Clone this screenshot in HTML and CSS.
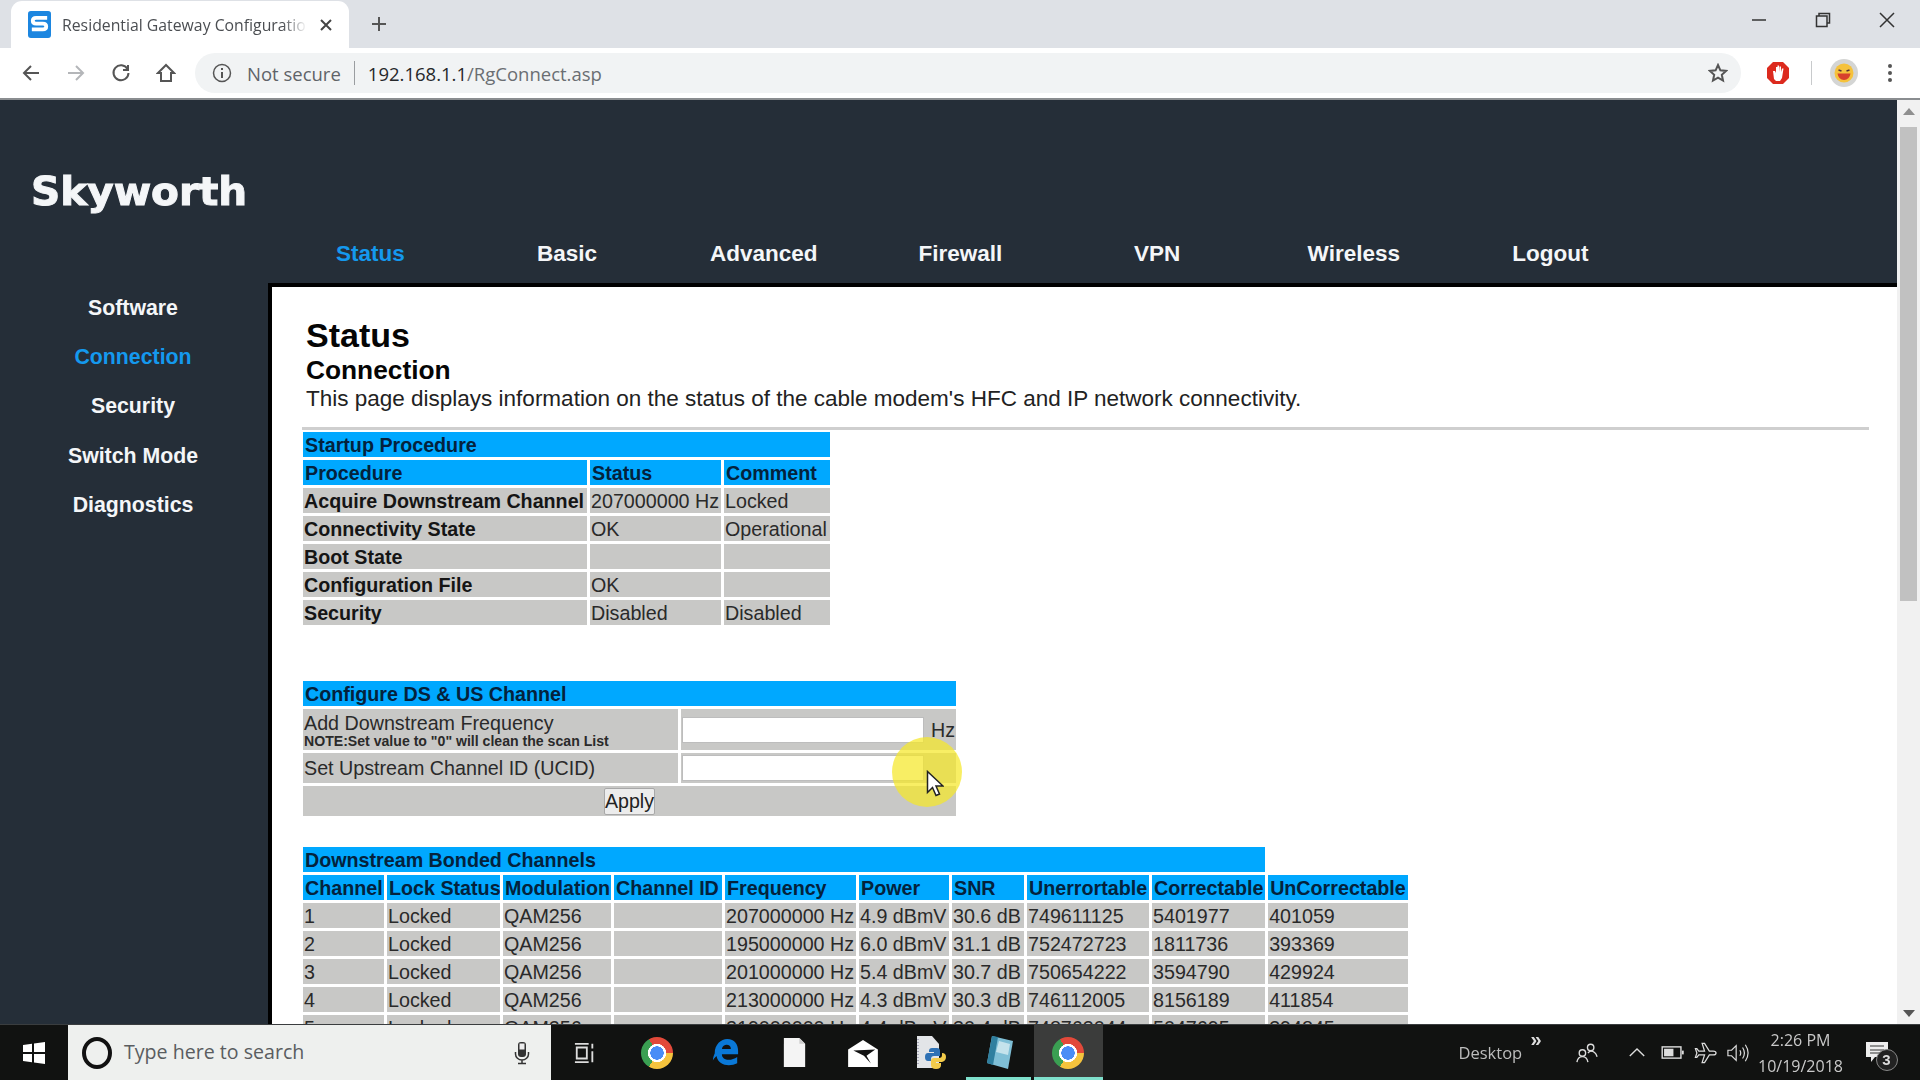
FILE: index.html
```html
<!DOCTYPE html>
<html lang="en">
<head>
<meta charset="utf-8">
<title>Residential Gateway Configuration</title>
<link rel="stylesheet" href="styles.css">
</head>
<body>
<div class="screen">
  <div class="tabstrip">
    <div class="tab">
      <svg class="favicon" viewBox="0 0 24 28"><rect width="24" height="28" rx="3" fill="#1c86e0"/><path d="M20 7H8.500Q5 7 5 10t3.500 3h7q3.500 0 3.500 3t-3.500 3H4" fill="none" stroke="#fff" stroke-width="4"/></svg>
      <span class="tab-title">Residential Gateway Configuration</span>
      <svg class="tab-close" viewBox="0 0 12 12"><path d="M1 1l10 10M11 1L1 11" stroke="#444" stroke-width="2"/></svg>
    </div>
    <svg class="newtab" viewBox="0 0 16 16"><path d="M8 1v14M1 8h14" stroke="#555" stroke-width="2"/></svg>
    <div class="winctl">
      <svg viewBox="0 0 16 16"><path d="M1 8h14" stroke="#333" stroke-width="1.500"/></svg>
      <svg viewBox="0 0 16 16"><path d="M4 4V1.500h10.500V11H12M1.500 4H12v10.500H1.500z" fill="none" stroke="#333" stroke-width="1.500"/></svg>
      <svg viewBox="0 0 16 16"><path d="M1 1l14 14M15 1L1 15" stroke="#333" stroke-width="1.500"/></svg>
    </div>
  </div>
  <div class="toolbar">
    <svg class="navicon" viewBox="0 0 20 20"><path d="M18 10H3M10 3l-7 7 7 7" fill="none" stroke="#555" stroke-width="2"/></svg>
    <svg class="navicon" viewBox="0 0 20 20"><path d="M2 10h15M10 3l7 7-7 7" fill="none" stroke="#b4b6b9" stroke-width="2"/></svg>
    <svg class="navicon" viewBox="0 0 20 20"><path d="M16.500 6A7.500 7.500 0 1 0 17.500 10M17 2v5h-5" fill="none" stroke="#555" stroke-width="2"/></svg>
    <svg class="navicon" viewBox="0 0 20 20"><path d="M10 2L2 10h3v8h10v-8h3z" fill="none" stroke="#555" stroke-width="2"/></svg>
    <div class="omnibox">
      <svg class="info" viewBox="0 0 20 20"><circle cx="10" cy="10" r="8.500" fill="none" stroke="#555" stroke-width="1.500"/><path d="M10 9v6M10 5v2" stroke="#555" stroke-width="2"/></svg>
      <span class="notsecure">Not secure</span>
      <span class="omni-sep"></span>
      <span class="url"><b>192.168.1.1</b>/RgConnect.asp</span>
      <svg class="star" viewBox="0 0 20 20"><path d="M10 2l2.400 5.300 5.600.6-4.200 3.900 1.200 5.700-5-2.900-5 2.900 1.200-5.700L2 7.900l5.600-.6z" fill="none" stroke="#555" stroke-width="2"/></svg>
    </div>
    <svg class="stopsign" viewBox="0 0 24 24"><path d="M7 1h10l6 6v10l-6 6H7l-6-6V7z" fill="#dc2a1e"/><path d="M8 18l-1-8h2l1 2V6h1.500v5V4.500H13V11l.5-5.500H15V11l1-3.500h1.500L16 17l-2 3h-4z" fill="#fff"/></svg>
    <span class="tool-sep"></span>
    <svg class="avatar" viewBox="0 0 28 28"><circle cx="14" cy="14" r="14" fill="#d4d5d4"/><circle cx="14" cy="14" r="9.500" fill="#f5c23c"/><path d="M7.500 14.500h13Q19.500 21 14 21t-6.500-6.500" fill="#d8412c"/><path d="M8.500 11l3 1M19.500 11l-3 1" stroke="#533" stroke-width="1.500"/></svg>
    <svg class="menu" viewBox="0 0 6 20"><circle cx="3" cy="3" r="2" fill="#555"/><circle cx="3" cy="10" r="2" fill="#555"/><circle cx="3" cy="17" r="2" fill="#555"/></svg>
  </div>
  <div class="viewport">
    <div class="page">
      <div class="topband">
        <div class="logo">Skyworth</div>
        <nav class="topnav">
          <a class="active">Status</a><a>Basic</a><a>Advanced</a><a>Firewall</a><a>VPN</a><a>Wireless</a><a>Logout</a>
        </nav>
      </div>
      <div class="lower">
        <aside class="sidebar">
          <a>Software</a><a class="active">Connection</a><a>Security</a><a>Switch Mode</a><a>Diagnostics</a>
        </aside>
        <main class="content">
          <h1>Status</h1>
          <h2>Connection</h2>
          <p class="lead">This page displays information on the status of the cable modem's HFC and IP network connectivity.</p>
          <div class="rule"></div>
          <table class="grid startup">
            <colgroup><col class="s1"><col class="s2"><col class="s3"></colgroup>
            <tr class="head"><td colspan="3">Startup Procedure</td></tr>
            <tr class="head"><td>Procedure</td><td>Status</td><td>Comment</td></tr>
            <tr><td class="strong">Acquire Downstream Channel</td><td>207000000 Hz</td><td>Locked</td></tr>
            <tr><td class="strong">Connectivity State</td><td>OK</td><td>Operational</td></tr>
            <tr><td class="strong">Boot State</td><td></td><td></td></tr>
            <tr><td class="strong">Configuration File</td><td>OK</td><td></td></tr>
            <tr><td class="strong">Security</td><td>Disabled</td><td>Disabled</td></tr>
          </table>
          <table class="grid config">
            <colgroup><col class="c1"><col class="c2"></colgroup>
            <tr class="head"><td colspan="2">Configure DS &amp; US Channel</td></tr>
            <tr class="tall"><td>Add Downstream Frequency<div class="note">NOTE:Set value to "0" will clean the scan List</div></td><td><div class="field"><input class="textin" type="text"><span>Hz</span></div></td></tr>
            <tr class="mid"><td>Set Upstream Channel ID (UCID)</td><td><div class="field"><input class="textin" type="text"></div></td></tr>
            <tr class="mid"><td colspan="2" class="center"><button class="apply">Apply</button></td></tr>
          </table>
          <table class="grid channels">
            <colgroup><col class="d1"><col class="d2"><col class="d3"><col class="d4"><col class="d5"><col class="d6"><col class="d7"><col class="d8"><col class="d9"><col class="d10"></colgroup>
            <tr class="head"><td colspan="9">Downstream Bonded Channels</td></tr>
            <tr class="head"><td>Channel</td><td>Lock Status</td><td>Modulation</td><td>Channel ID</td><td>Frequency</td><td>Power</td><td>SNR</td><td>Unerrortable</td><td>Correctable</td><td>UnCorrectable</td></tr>
            <tr><td>1</td><td>Locked</td><td>QAM256</td><td></td><td>207000000 Hz</td><td>4.9 dBmV</td><td>30.6 dB</td><td>749611125</td><td>5401977</td><td>401059</td></tr>
            <tr><td>2</td><td>Locked</td><td>QAM256</td><td></td><td>195000000 Hz</td><td>6.0 dBmV</td><td>31.1 dB</td><td>752472723</td><td>1811736</td><td>393369</td></tr>
            <tr><td>3</td><td>Locked</td><td>QAM256</td><td></td><td>201000000 Hz</td><td>5.4 dBmV</td><td>30.7 dB</td><td>750654222</td><td>3594790</td><td>429924</td></tr>
            <tr><td>4</td><td>Locked</td><td>QAM256</td><td></td><td>213000000 Hz</td><td>4.3 dBmV</td><td>30.3 dB</td><td>746112005</td><td>8156189</td><td>411854</td></tr>
            <tr><td>5</td><td>Locked</td><td>QAM256</td><td></td><td>219000000 Hz</td><td>4.4 dBmV</td><td>30.4 dB</td><td>748763044</td><td>5047695</td><td>394845</td></tr>
          </table>
          <div class="highlight"></div>
          <svg class="pointer" viewBox="0 0 18 28"><path d="M1.500 1.500v21l5-5 3.500 8 3.500-1.500-3.500-8h7z" fill="#fff" stroke="#222" stroke-width="1.500"/></svg>
        </main>
      </div>
    </div>
    <div class="scrollbar">
      <span class="arrow up"></span>
      <span class="thumb"></span>
      <span class="arrow down"></span>
    </div>
  </div>
  <footer class="taskbar">
    <div class="startbtn"><svg viewBox="0 0 24 24"><path d="M1 4l9-1.300V11H1zM12 2.400L23 1v10H12zM1 13h9v8.300L1 20zM12 13h11v10l-11-1.600z" fill="#fff"/></svg></div>
    <div class="searchbox">
      <span class="cortana"></span>
      <span class="searchtext">Type here to search</span>
      <svg class="mic" viewBox="0 0 16 24"><rect x="4" y="1" width="8" height="15" rx="3" fill="#333"/><rect x="5.500" y="2.500" width="5" height="6" fill="#eee"/><path d="M1.500 11v2a6.500 6 0 0 0 13 0v-2M8 19v3M4 22.500h8" fill="none" stroke="#333" stroke-width="1.500"/></svg>
    </div>
    <div class="taskitem taskview"><svg viewBox="0 0 24 24"><path d="M1 2h15M1 22h15M3 6h11v12H3zM20 2v5M20 10v12" fill="none" stroke="#ddd" stroke-width="2"/></svg></div>
    <div class="taskitem"><span class="chrome"></span></div>
    <div class="taskitem"><svg class="tico" viewBox="0 0 30 32"><path d="M3 17C3 7 10 1 17 1c8 0 12 6 12 13v4H11c0 7 10 8 17 3v7c-8 4-21 3-23-8-2 2-3 3-4 5 0-3 1-6 2-8zM11 12h10c0-6-9-6-10 0z" fill="#0a78d7"/></svg></div>
    <div class="taskitem"><svg class="tico" viewBox="0 0 24 32"><path d="M1 1h16l6 6v24H1z" fill="#f4f4f4"/><path d="M17 1v6h6" fill="#ccc"/></svg></div>
    <div class="taskitem"><svg class="tico wide" viewBox="0 0 34 32"><path d="M0 12L17 1l17 11v20H0z" fill="#fff"/><path d="M6 13l25-1-10 7 5 9-8-9z" fill="#111"/></svg></div>
    <div class="taskitem"><svg class="tico tall" viewBox="0 0 32 36"><path d="M2 1h15l7 8v24H2z" fill="#e3e5e8"/><path d="M3 4v27" stroke="#aab" stroke-width="2" stroke-dasharray="1 2"/><path d="M17 13h5q3 0 3 3v5h-6q-3 0-3 3v2h-3q-3 0-3-4t3-4h6v-1h-5v-1q0-3 3-3z" fill="#2f72b5"/><path d="M27 18q4 0 4 4t-4 5h-6v1h5v2q0 4-5 4t-5-4v-4q0-3 3-3h5q3 0 3-3z" fill="#f3cb4a"/></svg></div>
    <div class="taskitem underlined"><svg class="tico tall" viewBox="0 0 30 36"><path d="M7 1l21 5-5 28-21-6z" fill="#7fbfd6"/><path d="M2 28l5-27 6 1-5 28z" fill="#2f7f9f"/><path d="M14 6l11 3-2 11-12-3z" fill="#c5e3ec"/></svg></div>
    <div class="taskitem active underlined"><span class="chrome"></span></div>
    <div class="tray">
      <span class="desktop">Desktop</span>
      <span class="chev">»</span>
      <svg class="trayico people" viewBox="0 0 24 24"><circle cx="16" cy="6" r="3.500" fill="none" stroke="#ddd" stroke-width="1.500"/><circle cx="7" cy="12" r="3.500" fill="none" stroke="#ddd" stroke-width="1.500"/><path d="M1 22q1-6 6-6t6 6M13 12q2-2 3-2 5 0 7 6" fill="none" stroke="#ddd" stroke-width="1.500"/></svg>
      <svg class="trayico caret" viewBox="0 0 20 12"><path d="M2 10l8-8 8 8" fill="none" stroke="#ddd" stroke-width="1.500"/></svg>
      <svg class="trayico battery" viewBox="0 0 24 16"><rect x="1" y="2" width="20" height="12" fill="none" stroke="#ddd" stroke-width="1.500"/><rect x="3" y="4" width="10" height="8" fill="#ddd"/><path d="M22 6h2v4h-2z" fill="#ddd"/></svg>
      <svg class="trayico plane" viewBox="0 0 24 24"><path d="M23 12q0-2-3-2h-4L11 2H8.500l2.500 8H5L3 7.500H1.500L3 12l-1.500 4.500H3L5 14h6l-2.500 8H11l5-8h4q3 0 3-2z" fill="none" stroke="#ddd" stroke-width="1.300"/></svg>
      <svg class="trayico speaker" viewBox="0 0 24 24"><path d="M1 9h4l5-5v16l-5-5H1zM14 9q2 3 0 6M17 6q4 6 0 12M20 3q6 9 0 18" fill="none" stroke="#ddd" stroke-width="1.300"/></svg>
      <div class="clock"><div>2:26 PM</div><div>10/19/2018</div></div>
      <div class="notif">
        <svg viewBox="0 0 24 24"><path d="M1 2h22v15H10l-4 5v-5H1z" fill="#eee"/><path d="M5 6h14M5 10h14M5 13h10" stroke="#333" stroke-width="1.200"/></svg>
        <span class="badge">3</span>
      </div>
    </div>
  </footer>
</div>
</body>
</html>
```

FILE: styles.css
```css
* { box-sizing: border-box; }
html, body { margin: 0; height: 100%; overflow: hidden; }
body { font-family: "Liberation Sans", Arial, sans-serif; }
.screen { width: 1920px; height: 1080px; display: flex; flex-direction: column; overflow: hidden; filter: blur(0.6px); }

/* browser chrome */
.tabstrip { height: 48px; background: #dee1e6; display: flex; align-items: flex-end; flex: none; }
.tab { width: 338px; height: 47px; margin-left: 11px; background: #fff; border-radius: 11px 11px 0 0; display: flex; align-items: center; padding-left: 17px; }
.favicon { width: 23px; height: 27px; flex: none; }
.tab-title { width: 245px; margin-left: 11px; font: 15.800px "Open Sans", "Noto Sans", sans-serif; color: #4b4e52; white-space: nowrap; overflow: hidden; -webkit-mask-image: linear-gradient(90deg, #000 90%, transparent); mask-image: linear-gradient(90deg, #000 90%, transparent); }
.tab-close { width: 12px; height: 12px; margin-left: 13px; }
.newtab { width: 16px; height: 16px; margin: 0 0 16px 22px; }
.winctl { margin-left: auto; align-self: flex-start; display: flex; gap: 48px; padding: 12px 25px 0 0; }
.winctl svg { width: 16px; height: 16px; }
.toolbar { height: 52px; background: #fff; border-bottom: 2px solid #8a8d90; display: flex; align-items: center; padding: 0 0 0 21px; flex: none; }
.navicon { width: 20px; height: 20px; margin-right: 25px; flex: none; }
.omnibox { width: 1546px; height: 40px; margin-left: -6px; border-radius: 20px; background: #f1f3f4; display: flex; align-items: center; padding: 0 13px 0 17px; }
.info { width: 20px; height: 20px; }
.notsecure { margin-left: 15px; font: 18.500px "Open Sans", "Noto Sans", sans-serif; color: #5f6368; }
.omni-sep { width: 1px; height: 24px; background: #9a9da0; margin: 0 13px; }
.url { font: 18.500px "Open Sans", "Noto Sans", sans-serif; color: #6a6e72; }
.url b { font-weight: 400; color: #26282b; }
.star { width: 20px; height: 20px; margin-left: auto; }
.stopsign { width: 24px; height: 24px; margin-left: 25px; flex: none; }
.tool-sep { width: 1px; height: 24px; background: #c8cacc; margin: 0 18px 0 21px; flex: none; }
.avatar { width: 28px; height: 28px; flex: none; }
.menu { width: 6px; height: 20px; margin-left: 29px; flex: none; }

/* router page */
.viewport { flex: 1; min-height: 0; display: flex; position: relative; }
.page { flex: 1; min-width: 0; background: #252e38; overflow: hidden; display: flex; flex-direction: column; }
.scrollbar { width: 23px; background: #f1f1f1; display: flex; flex-direction: column; align-items: center; padding: 8px 0 7px; flex: none; }
.thumb { width: 17px; height: 474px; background: #c1c1c1; margin-top: 12px; }
.arrow { width: 0; height: 0; border-left: 6px solid transparent; border-right: 6px solid transparent; flex: none; }
.arrow.up { border-bottom: 7px solid #8f8f8f; }
.arrow.down { border-top: 7px solid #555; margin-top: auto; }
.topband { height: 183px; position: relative; display: flex; align-items: flex-end; flex: none; }
.logo { position: absolute; left: 31px; top: 62px; font: 700 39px "DejaVu Sans", sans-serif; color: #f4f6f8; letter-spacing: 0; line-height: 60px; -webkit-text-stroke: 1px #f4f6f8; transform: scaleX(1.04); transform-origin: left center; }
.topnav { display: flex; margin-left: 272px; padding-bottom: 16px; }
.topnav a { width: 196.700px; text-align: center; font-size: 22.500px; font-weight: 700; color: #f4f6f8; line-height: 26px; }
.topnav a.active, .sidebar a.active { color: #1499ee; }
.lower { flex: 1; min-height: 0; display: flex; }
.sidebar { width: 268px; display: flex; flex-direction: column; flex: none; }
.sidebar a { height: 49.200px; text-align: center; font-size: 21.300px; font-weight: 700; color: #f4f6f8; line-height: 50px; padding-right: 2px; }
.content { flex: 1; min-width: 0; position: relative; background: #fff; border-top: 4px solid #000; border-left: 4px solid #000; padding: 30px 28px 0 34px; overflow: hidden; color: #111; }
h1 { margin: 0 0 1px; font-size: 34px; line-height: 37px; font-weight: 700; color: #050505; }
h2 { margin: 0; font-size: 26.300px; line-height: 30px; font-weight: 700; color: #050505; }
.lead { margin: 0 0 14px; font-size: 22.500px; line-height: 28px; color: #222; }
.rule { height: 3px; background: #cfcfcf; margin-left: -4px; }

.grid { table-layout: fixed; border-collapse: separate; border-spacing: 3px; font-size: 19.700px; line-height: 22px; margin-left: -6px; color: #2a2a2a; }
.grid td { background: #c8c8c6; height: 25px; padding: 0 1px; white-space: nowrap; overflow: hidden; }
.grid .head td { background: #00a8ff; color: #04223c; font-weight: 700; padding-left: 2px; }
.grid td.strong { font-weight: 700; color: #151515; }
.startup { width: 530px; margin-top: -1px; }
.s1 { width: 284px; } .s2 { width: 131px; } .s3 { width: 106px; }
.config { width: 659px; margin-top: 50px; }
.c1 { width: 375px; } .c2 { width: 275px; }
.config .tall td { height: 41px; }
.config .mid td { height: 30px; }
.grid td.center { text-align: center; }
.note { font-size: 14.100px; line-height: 14px; font-weight: 700; }
.field { display: flex; align-items: center; gap: 7px; }
.textin { width: 242px; height: 26px; border: 1px solid #bdbdbd; background: #fff; margin: 0; padding: 0; flex: none; }
.config .field span { line-height: 26px; }
.apply { height: 27px; width: 51px; padding: 0; font: 19.600px "Liberation Sans", sans-serif; color: #222; background: #ececec; border: 1px solid #a8a8a8; border-radius: 2px; vertical-align: middle; }
.channels { width: 1111px; margin-top: 25px; }
.d1 { width: 81px; } .d2 { width: 113px; } .d3 { width: 108px; } .d4 { width: 108px; } .d5 { width: 131px; } .d6 { width: 90px; } .d7 { width: 72px; } .d8 { width: 122px; } .d9 { width: 113px; } .d10 { width: 140px; }

.highlight { position: absolute; left: 620px; top: 450px; width: 70px; height: 70px; border-radius: 50%; background: rgba(245, 232, 40, 0.72); }
.pointer { position: absolute; left: 654px; top: 483px; width: 18px; height: 28px; }

/* taskbar */
.taskbar { height: 56px; flex: none; background: #111211; border-top: 1px solid #3a3d3f; display: flex; align-items: stretch; color: #ddd; }
.startbtn { width: 68px; display: flex; align-items: center; justify-content: center; }
.startbtn svg { width: 24px; height: 24px; }
.searchbox { width: 483px; background: #eef0ee; display: flex; align-items: center; padding: 0 16px 0 14px; }
.cortana { width: 30px; height: 32px; border: 4px solid #111; border-radius: 50%; flex: none; }
.searchtext { margin-left: 12px; font: 19.600px "Open Sans", "Noto Sans", sans-serif; color: #5a5d60; padding-bottom: 2px; }
.mic { width: 16px; height: 24px; margin-left: auto; margin-right: 5px; }
.taskitem { width: 68.500px; display: flex; align-items: center; justify-content: center; position: relative; flex: none; }
.taskitem.taskview { width: 72px; padding-right: 4px; }
.taskview svg { width: 22px; height: 24px; }
.taskitem.active { background: #3b3c3b; }
.taskitem.underlined::after { content: ""; position: absolute; left: 0; right: 3px; bottom: 0; height: 3px; background: #7fe0cc; }
.taskitem.active.underlined::after { right: 0; }
.tico { width: 27px; height: 31px; }
.tico.wide { width: 34px; height: 28px; }
.tico.tall { width: 32px; height: 36px; }
.chrome { width: 32px; height: 32px; border-radius: 50%; background: radial-gradient(circle, #4a8df6 0 29%, #fff 30% 40%, transparent 41%), conic-gradient(from -30deg, #e2493a 0 120deg, #f5c33d 120deg 240deg, #3a9f52 240deg 360deg); }
.tray { flex: 1; display: flex; align-items: center; position: relative; padding-left: 356px; }
.desktop { font: 16.500px "Open Sans", "Noto Sans", sans-serif; color: #bdbdbd; width: 64px; }
.chev { font-size: 20px; font-weight: 700; line-height: 20px; margin: -28px 0 0 8px; width: 45px; color: #ddd; }
.trayico { flex: none; }
.people { width: 22px; height: 24px; margin-right: 30px; }
.caret { width: 18px; height: 11px; margin-right: 15px; }
.battery { width: 23px; height: 15px; margin-right: 10px; }
.plane { width: 23px; height: 24px; margin-right: 9px; }
.speaker { width: 24px; height: 22px; }
.clock { width: 90px; margin-left: 6px; text-align: center; font: 16px/26px "Open Sans", "Noto Sans", sans-serif; color: #c9c9c9; }
.notif { position: relative; width: 26px; height: 26px; margin-left: 19px; }
.notif svg { width: 24px; height: 24px; display: block; }
.badge { position: absolute; left: 11px; top: 9px; width: 22px; height: 22px; border-radius: 50%; background: #222; border: 1px solid #888; color: #ddd; font-size: 15px; font-weight: 700; text-align: center; line-height: 20px; }
```
